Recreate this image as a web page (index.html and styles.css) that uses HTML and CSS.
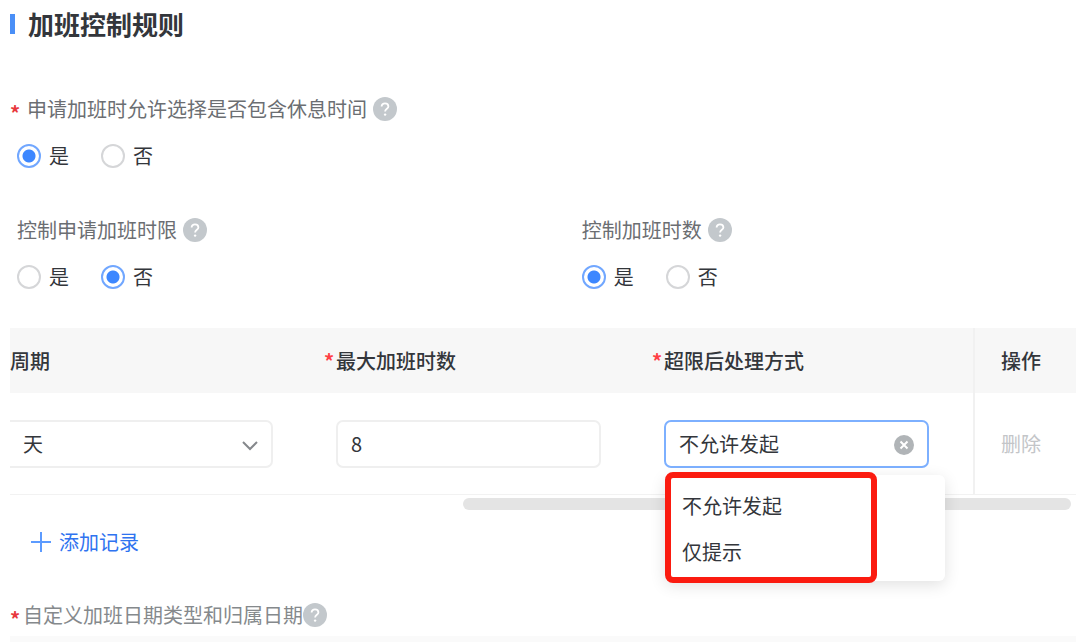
FILE: index.html
```html
<!DOCTYPE html>
<html lang="zh-CN">
<head>
  <meta charset="UTF-8">
  <title>加班控制规则</title>
  <meta name="viewport" content="width=device-width, initial-scale=1.0">
  <link rel="stylesheet" href="styles.css">
</head>
<body>

  <svg class="sprite" aria-hidden="true">
    <symbol id="icon-help" viewBox="0 0 24 24">
      <circle cx="12" cy="12" r="12" fill="#c3c8cc"/>
      <path d="M8.6 9.6C8.6 7.6 10 6.4 12 6.4s3.4 1.2 3.4 3c0 2.2-3.3 2.5-3.3 5" fill="none" stroke="#fff" stroke-width="1.8"/>
      <circle cx="12.1" cy="17.6" r="1.2" fill="#fff"/>
    </symbol>
  </svg>

  <main class="page">
    <h2 class="title">加班控制规则</h2>

    <fieldset class="field">
      <legend class="label"><span class="star">*</span>申请加班时允许选择是否包含休息时间<svg class="help"><use href="#icon-help"/></svg></legend>
      <div class="radios">
        <label><input type="radio" name="rest" checked>是</label>
        <label><input type="radio" name="rest">否</label>
      </div>
    </fieldset>

    <div class="field-grid">
      <fieldset class="field">
        <legend class="label">控制申请加班时限<svg class="help"><use href="#icon-help"/></svg></legend>
        <div class="radios">
          <label><input type="radio" name="deadline">是</label>
          <label><input type="radio" name="deadline" checked>否</label>
        </div>
      </fieldset>
      <fieldset class="field">
        <legend class="label">控制加班时数<svg class="help"><use href="#icon-help"/></svg></legend>
        <div class="radios">
          <label><input type="radio" name="hours" checked>是</label>
          <label><input type="radio" name="hours">否</label>
        </div>
      </fieldset>
    </div>

    <table class="rules">
      <colgroup>
        <col class="col-period">
        <col class="col-max">
        <col>
        <col class="col-action">
      </colgroup>
      <thead>
        <tr>
          <th class="first">周期</th>
          <th class="required"><span class="star">*</span>最大加班时数</th>
          <th class="required"><span class="star">*</span>超限后处理方式</th>
          <th class="action">操作</th>
        </tr>
      </thead>
      <tbody>
        <tr>
          <td class="first">
            <div class="control">
              <select class="input cut" aria-label="周期">
                <option>天</option>
              </select>
              <svg class="arrow" viewBox="0 0 18 12"><path d="M2 2l7 7 7-7" fill="none" stroke="#85888c" stroke-width="2"/></svg>
            </div>
          </td>
          <td>
            <input class="input" type="text" value="8" aria-label="最大加班时数">
          </td>
          <td class="last">
            <div class="control">
              <select class="input active" aria-label="超限后处理方式">
                <option>不允许发起</option>
                <option>仅提示</option>
              </select>
              <button class="clear" type="button" aria-label="清除">
                <svg viewBox="0 0 20 20"><circle cx="10" cy="10" r="10" fill="#b0b4b7"/><path d="M6.5 6.5l7 7M13.5 6.5l-7 7" stroke="#fff" stroke-width="2"/></svg>
              </button>
              <div class="menu">
                <div class="menu-marked">
                  <button type="button">不允许发起</button>
                  <button type="button">仅提示</button>
                </div>
              </div>
            </div>
          </td>
          <td class="action"><button class="delete" type="button" disabled>删除</button></td>
        </tr>
      </tbody>
    </table>
    <div class="scrollbar"></div>

    <button class="add" type="button">
      <svg viewBox="0 0 20 20"><path d="M10 0v20M0 10h20" stroke="#5c9bff" stroke-width="2"/></svg>添加记录
    </button>

    <div class="label date-label"><span class="star">*</span>自定义加班日期类型和归属日期<svg class="help"><use href="#icon-help"/></svg></div>
    <div class="next-table"></div>
  </main>

</body>
</html>
```
FILE: styles.css
```css
* { box-sizing: border-box; }
body {
  margin: 0;
  background: #fff;
  color: #33363b;
  font-family: "Noto Sans CJK SC", sans-serif;
  font-size: 20px;
  line-height: 30px;
}
button, input, select {
  font: inherit;
  color: inherit;
}
button {
  border: none;
  background: none;
  padding: 0;
  cursor: pointer;
}
.sprite {
  display: none;
}
.page {
  padding: 0 4px 0 10px;
}
.title {
  display: flex;
  align-items: center;
  gap: 13px;
  height: 48px;
  margin: 0 0 46px;
  font-size: 26px;
  font-weight: 700;
}
.title::before {
  content: "";
  width: 5px;
  height: 20px;
  background: #4a8ff7;
}

/* form fields */
.field {
  border: none;
  margin: 0;
  padding: 0;
  min-width: 0;
}
.label {
  display: flex;
  align-items: center;
  padding: 0;
  height: 30px;
  color: #6b6e72;
}
.star {
  color: #e8383d;
  font-weight: 700;
}
.label .star {
  width: 17px;
  padding-top: 7px;
}
.help {
  width: 24px;
  height: 24px;
  margin-left: 6px;
}
.radios {
  display: flex;
  gap: 32px;
  margin-top: 17px;
}
.page > .field .radios {
  padding-left: 7px;
}
.radios label {
  display: flex;
  align-items: center;
  gap: 8px;
}
.radios input {
  appearance: none;
  width: 24px;
  height: 24px;
  margin: 0;
  border: 2px solid #d5d6d8;
  border-radius: 50%;
}
.radios input:checked {
  border-color: #71a7ff;
  background: radial-gradient(circle, #3d87ff 6px, #fff 7px);
}
.field-grid {
  display: grid;
  grid-template-columns: 8fr 7fr;
  margin-top: 44px;
  padding-left: 7px;
}

/* rules table */
.rules {
  width: 100%;
  margin-top: 36px;
  table-layout: fixed;
  border-collapse: separate;
  border-spacing: 0;
}
.col-period {
  width: 298px;
}
.col-max {
  width: 328px;
}
.col-action {
  width: 103px;
}
.rules th {
  height: 65px;
  padding: 0 0 0 28px;
  background: #f7f7f7;
  font-weight: 500;
  text-align: left;
}
.rules th.required {
  padding-left: 16px;
}
.required .star {
  display: inline-block;
  width: 12px;
  color: #ff4045;
}
.rules td {
  height: 102px;
  padding: 0 35px 0 28px;
  border-bottom: 1px solid #f2f2f2;
}
.rules .first {
  padding-left: 0;
}
.rules td.last {
  padding-right: 44px;
}
.rules .action {
  padding: 0 0 0 26px;
  border-left: 2px solid #f1f1f1;
}
.control {
  position: relative;
}
.input {
  display: block;
  appearance: none;
  width: 100%;
  height: 48px;
  padding: 0 13px;
  border: 2px solid #efefef;
  border-radius: 7px;
  background: #fff;
  outline: none;
}
.input.cut {
  border-left: none;
  border-radius: 0 7px 7px 0;
}
.input.active {
  border-color: #7db0ff;
}
.arrow {
  position: absolute;
  top: 20px;
  right: 14px;
  width: 18px;
  height: 12px;
}
.clear {
  position: absolute;
  top: 15px;
  right: 15px;
  width: 20px;
  height: 20px;
}
.clear svg {
  display: block;
}
.menu {
  position: absolute;
  z-index: 2;
  top: 55px;
  left: 1px;
  width: 280px;
  height: 106px;
  border-radius: 6px;
  background: #fff;
  box-shadow: 0 4px 16px rgba(0,0,0,0.12);
}
.menu-marked {
  width: 212px;
  height: 111px;
  margin-top: -3px;
  padding: 5px 0 0 11px;
  border: 6px solid #fb1b10;
  border-radius: 8px;
}
.menu-marked button {
  display: block;
  height: 46px;
}
.delete {
  color: #c3c5c8;
}
.scrollbar {
  width: 57%;
  height: 12px;
  margin: 3px 5px 0 auto;
  border-radius: 6px;
  background: #e4e4e4;
}
.add {
  display: flex;
  align-items: center;
  gap: 8px;
  margin: 17px 0 0 21px;
  color: #2f73f0;
}
.add svg {
  width: 20px;
  height: 20px;
}
.date-label {
  margin-top: 43px;
  color: #85898c;
}
.date-label .star {
  width: 13px;
}
.date-label .help {
  margin-left: 0;
}
.next-table {
  height: 6px;
  margin-top: 6px;
  background: #fafafa;
}
```
